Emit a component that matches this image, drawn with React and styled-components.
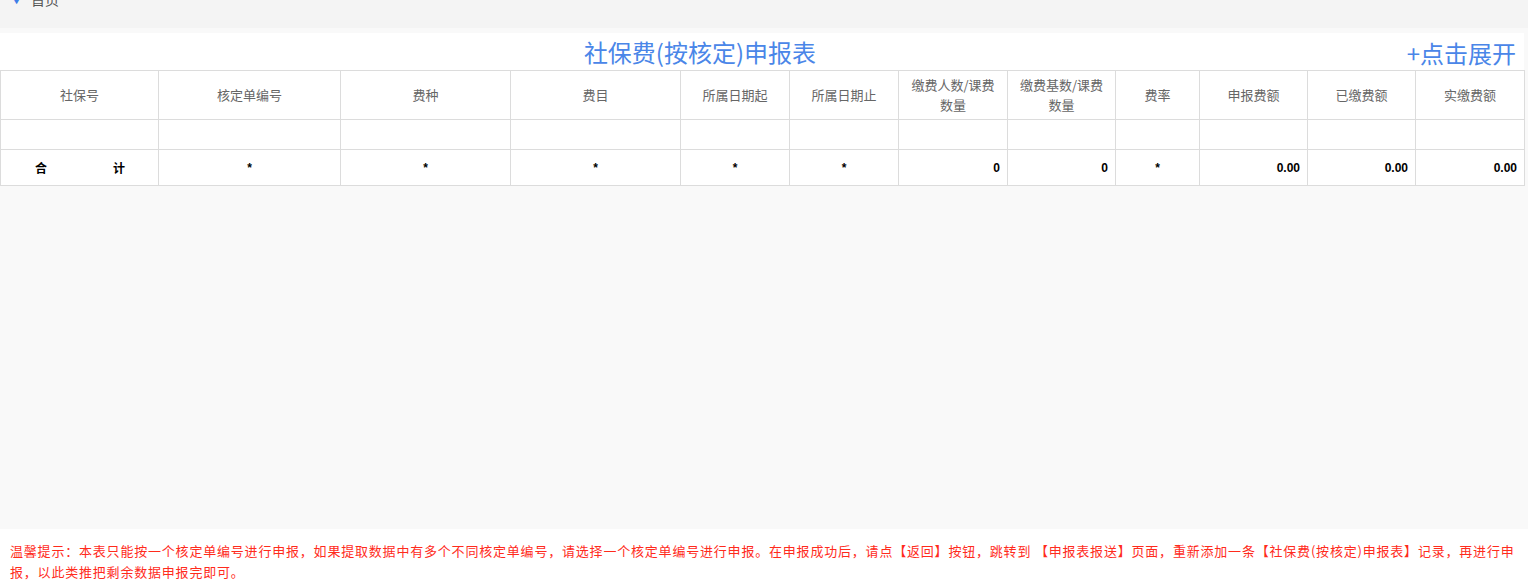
import React from 'react';
import styled, { createGlobalStyle } from 'styled-components';

const Global = createGlobalStyle`
  html, body { margin: 0; padding: 0; background: #f9f9f9; overflow: hidden; }
  body { font-family: "Microsoft YaHei", "Noto Sans CJK SC", sans-serif; }
`;

const Page = styled.div`
  width: 1528px;
  height: 587px;
  display: flex;
  flex-direction: column;
  background: #f9f9f9;
`;

const TopBar = styled.div`
  height: 28px;
  background: #f4f4f4;
  display: flex;
  align-items: flex-start;
  padding-left: 12px;
  gap: 10px;
  font-size: 14px;
  color: #555;
  margin-bottom: 5px;
  overflow: hidden;
`;

const Crumb = styled.span`
  margin-top: -11px;
  line-height: 20px;
`;

const Arrow = styled.span`
  margin-top: -6px;
  color: #3d7ee8;
  font-size: 9px;
`;

const Panel = styled.div`
  width: 1524px;
  background: #fff;
`;

const TitleRow = styled.div`
  height: 37px;
  display: flex;
  align-items: center;
  justify-content: center;
  padding-right: 124px;
  position: relative;
  color: #4a86e8;
  font-size: 24px;
`;

const Expand = styled.span`
  position: absolute;
  right: 8px;
  top: 2px;
  font-size: 24px;
  color: #4a86e8;
  cursor: pointer;
`;

const Table = styled.table`
  border-collapse: collapse;
  table-layout: fixed;
  width: 1524px;
  font-size: 13px;
`;

const Th = styled.th`
  height: 48px;
  border: 1px solid #dcdcdc;
  font-weight: normal;
  color: #666;
  line-height: 20px;
  padding: 0 9px;
`;

const Td = styled.td`
  height: ${p => p.h || 29}px;
  border: 1px solid #dcdcdc;
  text-align: ${p => p.align || 'center'};
  font-weight: bold;
  font-size: 12px;
  color: #000;
  padding: 0 7px;
  font-family: "Liberation Sans", "Noto Sans CJK SC", sans-serif;
`;

const Total = styled.div`
  display: flex;
  justify-content: space-between;
  padding: 0 26px 0 27px;
`;

const Spacer = styled.div`
  flex: 1;
`;

const Notice = styled.div`
  background: #fff;
  color: #ff2b1c;
  font-size: 13px;
  letter-spacing: 0.8px;
  line-height: 21px;
  padding: 11px 4px 6px 10px;
  height: 41px;
`;

const widths = [158, 182, 170, 170, 109, 109, 109, 108, 84, 108, 108, 109];
const heads = ['社保号', '核定单编号', '费种', '费目', '所属日期起', '所属日期止', '缴费人数/课费数量', '缴费基数/课费数量', '费率', '申报费额', '已缴费额', '实缴费额'];
const totals = [null, '*', '*', '*', '*', '*', ['0', 'right'], ['0', 'right'], '*', ['0.00', 'right'], ['0.00', 'right'], ['0.00', 'right']];

export default function App() {
  return (
    <Page>
      <Global />
      <TopBar><Arrow>▼</Arrow><Crumb>首页</Crumb></TopBar>
      <Panel>
        <TitleRow>
          社保费(按核定)申报表
          <Expand>+点击展开</Expand>
        </TitleRow>
        <Table>
          <colgroup>{widths.map((w, i) => <col key={i} style={{ width: w }} />)}</colgroup>
          <thead>
            <tr>{heads.map(h => <Th key={h}>{h}</Th>)}</tr>
          </thead>
          <tbody>
            <tr>{heads.map(h => <Td key={h} />)}</tr>
            <tr>
              {totals.map((t, i) => i === 0
                ? <Td key={i} h={35}><Total><span>合</span><span>计</span></Total></Td>
                : Array.isArray(t)
                  ? <Td key={i} h={35} align={t[1]}>{t[0]}</Td>
                  : <Td key={i} h={35}>{t}</Td>)}
            </tr>
          </tbody>
        </Table>
      </Panel>
      <Spacer />
      <Notice>
        温馨提示：本表只能按一个核定单编号进行申报，如果提取数据中有多个不同核定单编号，请选择一个核定单编号进行申报。在申报成功后，请点【返回】按钮，跳转到 【申报表报送】页面，重新添加一条【社保费(按核定)申报表】记录，再进行申报，以此类推把剩余数据申报完即可。
      </Notice>
    </Page>
  );
}
